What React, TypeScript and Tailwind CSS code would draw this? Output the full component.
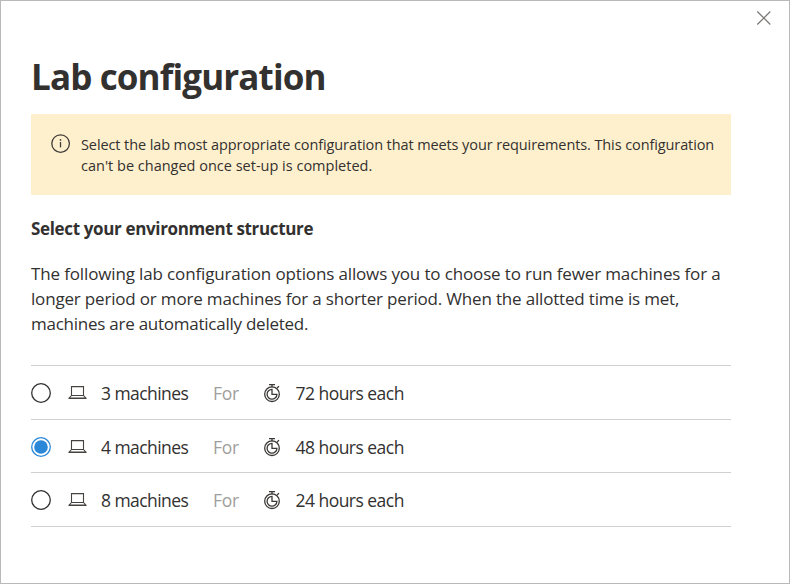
import React from "react";

const options = [
  { machines: "3 machines", hours: "72 hours each", selected: false },
  { machines: "4 machines", hours: "48 hours each", selected: true },
  { machines: "8 machines", hours: "24 hours each", selected: false },
];

function CloseIcon() {
  return (
    <svg width="16" height="16" viewBox="0 0 16 16" fill="none" stroke="#7a7876" strokeWidth="1.2">
      <path d="M1.3 1.5 14.3 14.5M14.3 1.5 1.3 14.5" />
    </svg>
  );
}

function InfoIcon() {
  return (
    <svg width="20" height="20" viewBox="0 0 20 20" fill="none" stroke="#3f3c39" strokeWidth="1.3" className="shrink-0">
      <circle cx="9.6" cy="9.6" r="8.8" />
      <path d="M9.5 8V13.4" />
      <circle cx="9.5" cy="5.9" r="0.85" fill="#3f3c39" stroke="none" />
    </svg>
  );
}

function LaptopIcon() {
  return (
    <svg width="20" height="16" viewBox="0 0 20 16" fill="none" stroke="#45423f" strokeWidth="1.1">
      <path d="M3.5 10.5V1.6H15.5V10.5ZM3.5 10.5 1.2 13H17.8L15.5 10.5M1.2 12.6V13.4H17.8V12.6" />
    </svg>
  );
}

function StopwatchIcon() {
  return (
    <svg width="18" height="20" viewBox="0 0 18 20" fill="none" stroke="#3b3835" strokeWidth="1.3">
      <path d="M6 1.6H12M9 1.6V4.2M14.1 5 16 3.1" />
      <circle cx="9" cy="11.2" r="7.3" />
      <path d="M9 6.4A4.9 4.9 0 1 0 13.9 11.4H9Z" />
    </svg>
  );
}

function Radio({ selected }: { selected: boolean }) {
  return (
    <svg role="radio" aria-checked={selected} width="20" height="20" viewBox="0 0 20 20" fill="none">
      <circle cx="10" cy="10" r="9.3" stroke={selected ? "#2b88d8" : "#323130"} strokeWidth="1.3" />
      {selected && <circle cx="10" cy="10" r="6.8" fill="#2b88d8" />}
    </svg>
  );
}

export default function App() {
  return (
    <main className="relative h-[584px] w-[790px] border border-[#b9b9b9] bg-white px-[30px] font-['Open_Sans','Noto_Sans',sans-serif] text-[#323130]">
      <button aria-label="Close" className="absolute top-[9px] right-[17px]">
        <CloseIcon />
      </button>
      <h1 className="pt-[52px] text-[35px] leading-[48px] font-bold tracking-[-0.87px]">Lab configuration</h1>
      <div className="mt-[13px] flex h-[81px] w-[700px] bg-[#fff0cd] pt-5 pl-5">
        <InfoIcon />
        <p className="ml-[10px] text-[14.5px] leading-[21px] whitespace-nowrap">
          <span className="tracking-[-0.1px]">Select the lab most appropriate configuration that meets your requirements. This configuration</span>
          <br />
          <span>can't be changed once set-up is completed.</span>
        </p>
      </div>
      <h2 className="mt-[22px] text-[17px] leading-6 font-bold tracking-[-0.35px]">
        Select your environment structure
      </h2>
      <p className="mt-5 text-[17px] leading-[25px] whitespace-nowrap">
        <span className="tracking-[-0.14px]">The following lab configuration options allows you to choose to run fewer machines for a</span>
        <br />
        <span className="tracking-[-0.18px]">longer period or more machines for a shorter period. When the allotted time is met,</span>
        <br />
        <span className="tracking-[-0.25px]">machines are automatically deleted.</span>
      </p>
      <div role="radiogroup" className="mt-[29px] w-[700px] border-t border-[#d2d0ce] text-[17.5px]">
        {options.map((o) => (
          <div key={o.hours} className="flex h-[53.67px] items-center border-b border-[#d2d0ce] pt-[1.5px]">
            <Radio selected={o.selected} />
            <span className="ml-[17px] w-[33px]">
              <LaptopIcon />
            </span>
            <span className="w-[112px] tracking-[-0.57px] whitespace-nowrap">{o.machines}</span>
            <span className="w-[50px] tracking-[-0.3px] text-[#a09e9c]">For</span>
            <span className="w-[32.5px]">
              <StopwatchIcon />
            </span>
            <span className="tracking-[-0.53px] whitespace-nowrap">{o.hours}</span>
          </div>
        ))}
      </div>
    </main>
  );
}
